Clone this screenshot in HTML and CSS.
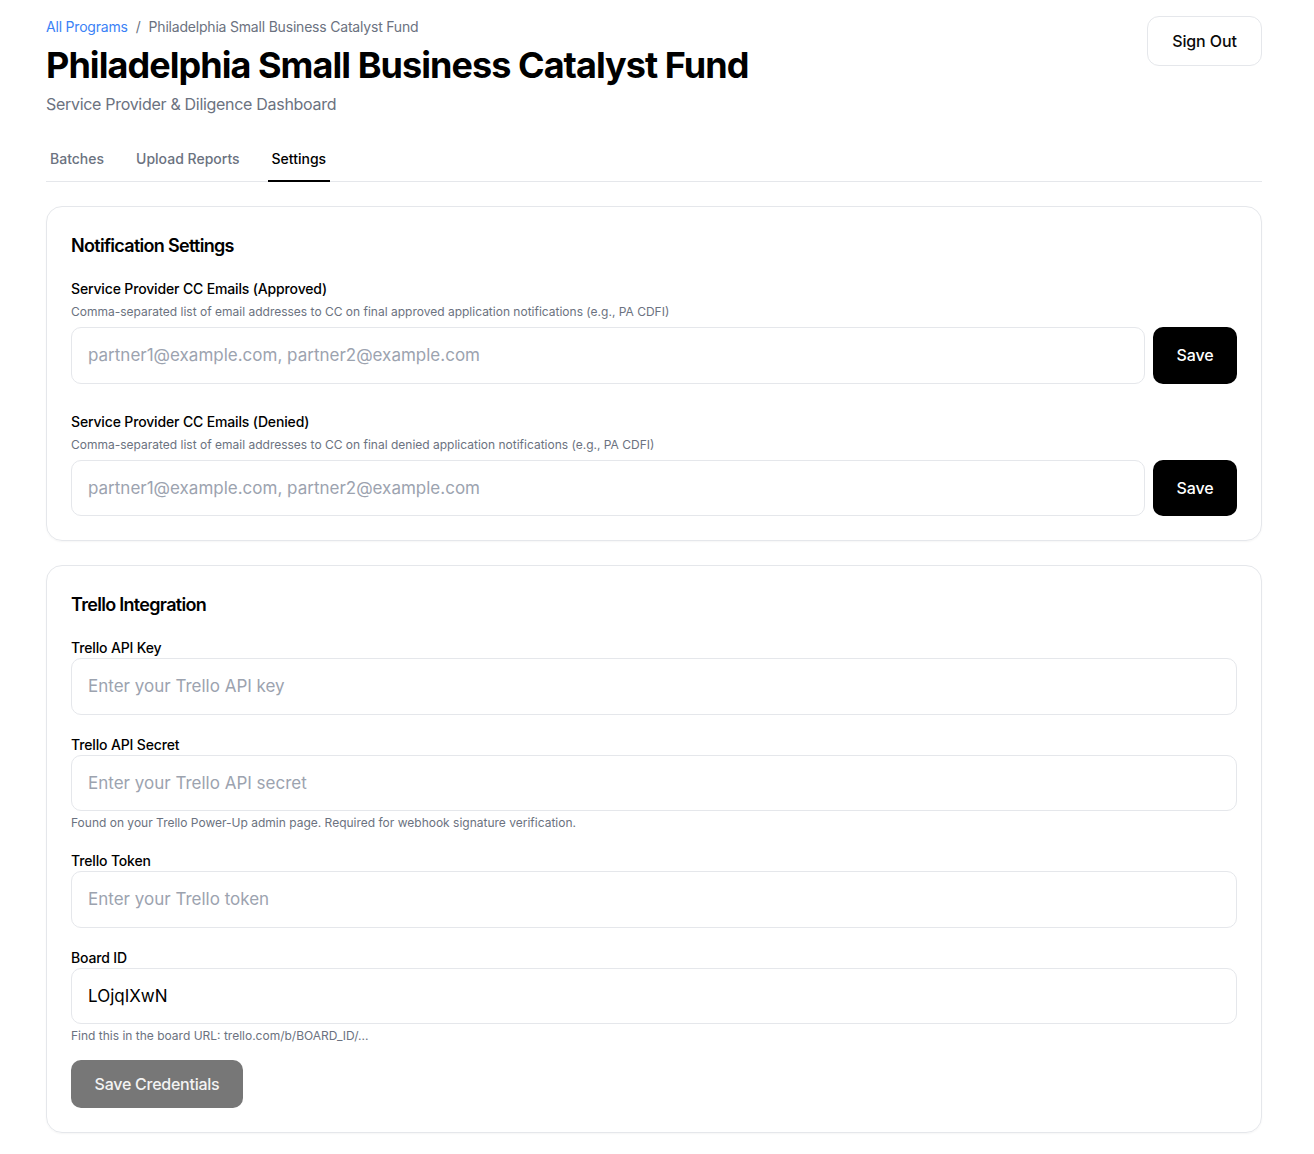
FILE: index.html
```html
<!DOCTYPE html>
<html lang="en">
<head>
<meta charset="utf-8">
<title>Philadelphia Small Business Catalyst Fund</title>
<link rel="stylesheet" href="styles.css">
</head>
<body>
<div class="page">
  <header class="header">
    <div class="header-main">
      <nav class="breadcrumb">
        <a class="crumb-link" href="#">All Programs</a>
        <span class="crumb-sep">/</span>
        <span class="crumb-current">Philadelphia Small Business Catalyst Fund</span>
      </nav>
      <h1 class="title">Philadelphia Small Business Catalyst Fund</h1>
      <p class="subtitle">Service Provider &amp; Diligence Dashboard</p>
    </div>
    <button class="btn-outline">Sign Out</button>
  </header>

  <div class="tabs">
    <div class="tab">Batches</div>
    <div class="tab">Upload Reports</div>
    <div class="tab tab-active">Settings</div>
  </div>

  <section class="card card-notify">
    <h2 class="card-title">Notification Settings</h2>
    <div class="group">
      <div class="label">Service Provider CC Emails (Approved)</div>
      <div class="desc">Comma-separated list of email addresses to CC on final approved application notifications (e.g., PA CDFI)</div>
      <div class="row">
        <input class="input" type="text" placeholder="partner1@example.com, partner2@example.com">
        <button class="btn-dark">Save</button>
      </div>
    </div>
    <div class="group">
      <div class="label">Service Provider CC Emails (Denied)</div>
      <div class="desc">Comma-separated list of email addresses to CC on final denied application notifications (e.g., PA CDFI)</div>
      <div class="row">
        <input class="input" type="text" placeholder="partner1@example.com, partner2@example.com">
        <button class="btn-dark">Save</button>
      </div>
    </div>
  </section>

  <section class="card card-trello">
    <h2 class="card-title">Trello Integration</h2>
    <div class="field">
      <div class="label">Trello API Key</div>
      <input class="input" type="text" placeholder="Enter your Trello API key">
    </div>
    <div class="field">
      <div class="label">Trello API Secret</div>
      <input class="input" type="text" placeholder="Enter your Trello API secret">
      <div class="help">Found on your Trello Power-Up admin page. Required for webhook signature verification.</div>
    </div>
    <div class="field">
      <div class="label">Trello Token</div>
      <input class="input" type="text" placeholder="Enter your Trello token">
    </div>
    <div class="field">
      <div class="label">Board ID</div>
      <input class="input" type="text" value="LOjqIXwN">
      <div class="help">Find this in the board URL: trello.com/b/BOARD_ID/...</div>
    </div>
    <button class="btn-gray">Save Credentials</button>
  </section>
</div>
</body>
</html>
```

FILE: styles.css
```css
* { box-sizing: border-box; }

body {
  margin: 0;
  background: #ffffff;
  font-family: Inter, "Noto Sans", "Liberation Sans", sans-serif;
  color: #0a0a0a;
}

.page {
  width: 1216px;
  margin-left: 46px;
  padding-top: 16px;
  padding-bottom: 20px;
}

.header {
  display: flex;
  justify-content: space-between;
  align-items: flex-start;
}

.breadcrumb {
  font-size: 14px;
  line-height: 20px;
  color: #6b7280;
  display: flex;
  gap: 8px;
  padding-top: 1px;
  letter-spacing: -0.2px;
}

.crumb-link {
  color: #3b82f6;
  text-decoration: none;
}

.title {
  margin: 8px 0 0 0;
  font-size: 36px;
  line-height: 40px;
  font-weight: 700;
  letter-spacing: -0.95px;
  color: #000;
}

.subtitle {
  margin: 7px 0 0 0;
  font-size: 16px;
  line-height: 24px;
  color: #6b7280;
  letter-spacing: -0.3px;
}

.btn-outline {
  font-family: inherit;
  font-size: 16px;
  font-weight: 500;
  color: #0a0a0a;
  background: #fff;
  border: 1px solid #e5e7eb;
  border-radius: 12px;
  width: 115px;
  height: 50px;
  letter-spacing: -0.1px;
  cursor: pointer;
}

.tabs {
  display: flex;
  gap: 24px;
  margin-top: 22px;
  border-bottom: 1px solid #e5e7eb;
  height: 44px;
}

.tab {
  font-size: 14px;
  line-height: 20px;
  font-weight: 500;
  color: #6b7280;
  padding: 11px 4px 11px 4px;
  border-bottom: 2px solid transparent;
  height: 44px;
}

.tab-active {
  color: #000;
  border-bottom-color: #000;
}

.card {
  margin-top: 24px;
  border: 1px solid #e5e7eb;
  border-radius: 16px;
  padding: 25px 24px 24px 24px;
  box-shadow: 0 1px 2px rgba(0,0,0,0.04);
}

.card-title {
  margin: 0 0 19px 0;
  font-size: 18px;
  line-height: 28px;
  font-weight: 600;
  letter-spacing: -0.7px;
  color: #000;
}

.group + .group {
  margin-top: 28px;
}

.label {
  font-size: 14px;
  line-height: 20px;
  font-weight: 500;
  color: #000;
  letter-spacing: -0.15px;
}

.desc {
  margin-top: 5px;
  font-size: 12px;
  line-height: 16px;
  color: #6b7280;
}

.row {
  display: flex;
  gap: 8px;
  margin-top: 7px;
}

.input {
  display: block;
  width: 100%;
  height: 56.5px;
  border: 1px solid #e5e7eb;
  border-radius: 10px;
  padding: 0 16px;
  font-family: inherit;
  font-size: 17px;
  color: #000;
  background: #fff;
  outline: none;
}

.row .input {
  flex: 1;
}

.input::placeholder {
  color: #9ca3af;
}

.btn-dark {
  flex: none;
  width: 84px;
  border: none;
  border-radius: 10px;
  background: #000;
  color: #fff;
  font-family: inherit;
  font-size: 16px;
  font-weight: 500;
  letter-spacing: -0.1px;
  cursor: pointer;
}

.field + .field {
  margin-top: 20px;
}

.help {
  margin-top: 4px;
  font-size: 12px;
  line-height: 16px;
  color: #6b7280;
}

.btn-gray {
  margin-top: 16px;
  width: 172px;
  height: 48px;
  border: none;
  border-radius: 10px;
  background: #777777;
  color: #f3f3f3;
  font-family: inherit;
  font-size: 16px;
  font-weight: 500;
  letter-spacing: -0.25px;
}
```
